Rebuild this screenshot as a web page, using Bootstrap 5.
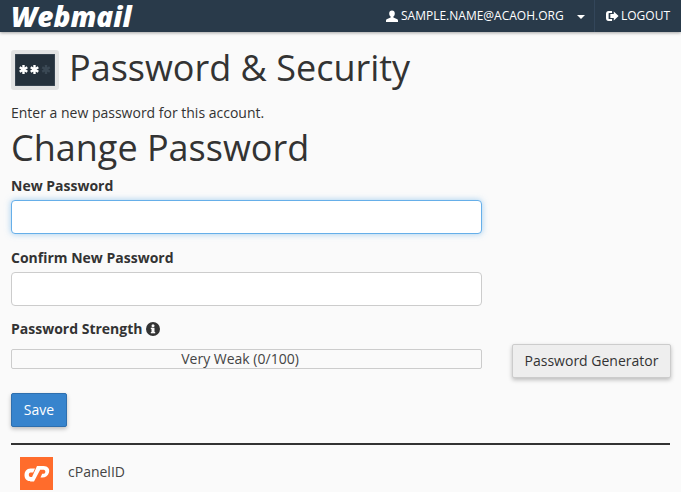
<!DOCTYPE html>
<html lang="en">
    <head>
        <meta charset="UTF-8" />
        <meta name="viewport" content="width=device-width, initial-scale=1" />
        <title>Password &amp; Security</title>
        <link href="https://cdn.jsdelivr.net/npm/bootstrap@5.3.0/dist/css/bootstrap.min.css" rel="stylesheet" />
        <style>
            body {
                background: #fafafa;
                color: #333;
                font-family: "Open Sans", sans-serif;
                font-size: 14px;
                overflow: hidden;
            }
            .top-bar {
                height: 32px;
                background: #293a4a;
                box-shadow: 0 1px 3px rgba(0, 0, 0, 0.35);
                color: #fff;
                font-size: 12px;
            }
            .brand-name {
                font-family: "Open Sans", sans-serif;
                font-size: 28px;
                font-weight: 800;
                font-style: italic;
                line-height: 30px;
                margin-left: 11px;
            }
            .user-box {
                flex: 0 0 208px;
                gap: 3px;
            }
            .user-caret {
                width: 0;
                height: 0;
                border-left: 4px solid transparent;
                border-right: 4px solid transparent;
                border-top: 4px solid #fff;
                margin-left: 10px;
                margin-top: 1px;
            }
            .logout-box {
                flex: 0 0 87px;
                height: 32px;
                border-left: 1px solid #33465a;
                padding-left: 11px;
                gap: 2px;
            }
            .page-wrap {
                padding: 0 11px;
            }
            .title-row {
                margin-top: 18px;
                height: 40px;
                gap: 10px;
            }
            .title-icon {
                width: 48px;
                height: 40px;
                background: #e3e3e3;
                border-radius: 3px;
                padding: 4px;
            }
            .title-text {
                font-size: 36px;
                font-weight: 400;
                line-height: 40px;
                margin: 0 0 4px;
            }
            .intro-text {
                margin: 13px 0 0;
                line-height: 20px;
            }
            .form-title {
                font-size: 36px;
                font-weight: 400;
                line-height: 40px;
                margin: 5px 0 0;
            }
            .field-label {
                font-weight: 700;
                line-height: 20px;
                margin: 8px 0 4px;
                display: block;
            }
            .form-column {
                width: 471px;
            }
            .pw-input {
                height: 34px;
                border: 1px solid #ccc;
                border-radius: 4px;
                background: #fff;
                box-shadow: none;
            }
            .pw-input.is-focused {
                border-color: #66afe9;
                box-shadow: 0 0 6px rgba(102, 175, 233, 0.6);
            }
            .field-gap {
                margin-bottom: 14px;
            }
            .field-gap + .field-gap {
                margin-bottom: 13px;
            }
            .strength-row {
                margin-top: 5px;
                height: 34px;
            }
            .strength-box {
                flex: 0 0 471px;
                height: 20px;
                margin-top: 5px;
                padding-right: 13px;
                border: 1px solid #ccc;
                border-radius: 2px;
                line-height: 18px;
                text-align: center;
                font-size: 14px;
                color: #444;
            }
            .generator-btn {
                flex: 0 0 159px;
                margin-left: 30px;
                height: 34px;
                padding: 0 0 2px;
                background: #eee;
                border: 1px solid #ccc;
                border-radius: 2px;
                box-shadow: 0 2px 4px rgba(0, 0, 0, 0.25);
                color: #333;
                font-size: 14px;
            }
            .save-btn {
                display: block;
                width: 56px;
                height: 34px;
                padding: 0 0 2px;
                margin-top: 15px;
                background: #3784cd;
                border: 1px solid #2e6fae;
                border-radius: 2px;
                box-shadow: 0 2px 4px rgba(0, 0, 0, 0.25);
                color: #fff;
                font-size: 14px;
            }
            .bottom-rule {
                margin: 16px 0 0;
                border: 0;
                border-top: 2px solid #333;
                opacity: 1;
                width: 659px;
            }
            .cpanel-row {
                padding: 12px 0 0 9px;
                gap: 15px;
                line-height: 30px;
                color: #444;
            }
        </style>
    </head>
    <body>
        <nav class="top-bar d-flex align-items-center">
            <div class="brand-name flex-grow-1">Webmail</div>
            <div class="user-box d-flex align-items-center">
                <svg width="12" height="12" viewBox="0 0 12 12" fill="#fff" class="flex-shrink-0">
                    <path d="M6 0.5c1.8 0 2.8 1.3 2.8 3 0 1.4-.6 2.6-1.4 3.1v1l3.4 1.4c.8.3 1.2.8 1.2 1.6V12H0v-1.4c0-.8.4-1.3 1.2-1.6l3.4-1.4v-1C3.8 6.100 3.200 4.900 3.200 3.500c0-1.700 1-3 2.800-3z" />
                </svg>
                <span>SAMPLE.NAME@ACAOH.ORG</span>
                <span class="user-caret"></span>
            </div>
            <div class="logout-box d-flex align-items-center">
                <svg width="13" height="12" viewBox="0 0 15 12" preserveAspectRatio="none" fill="#fff" class="flex-shrink-0">
                    <path d="M3 1h4v2H3.500a.5.5 0 0 0-.5.5v5a.5.5 0 0 0 .5.5H7v2H3a3 3 0 0 1-3-3V4a3 3 0 0 1 3-3z" />
                    <path d="M9 1.500 14.500 6 9 10.500V8H5V4h4z" />
                </svg>
                <span>LOGOUT</span>
            </div>
        </nav>

        <main class="page-wrap">
            <div class="title-row d-flex align-items-center">
                <div class="title-icon">
                    <svg width="40" height="32" viewBox="0 0 40 32" class="d-block">
                        <rect width="40" height="32" fill="#25313c" stroke="#4a5763" />
                        <g stroke="#fff" stroke-width="2.400">
                            <path d="M8.500 11v9M4.700 13.200l7.600 4.600M4.700 17.800l7.600-4.600" />
                            <path d="M19.500 11v9M15.700 13.200l7.600 4.600M15.700 17.800l7.600-4.600" />
                        </g>
                        <path stroke="#3a4854" stroke-width="2.400" d="M31 11v9M27.200 13.200l7.600 4.600M27.200 17.800l7.600-4.600" />
                    </svg>
                </div>
                <h1 class="title-text">Password &amp; Security</h1>
            </div>

            <p class="intro-text">Enter a new password for this account.</p>
            <h2 class="form-title">Change Password</h2>

            <form>
                <div class="form-column field-gap">
                    <label class="field-label" for="newPass">New Password</label>
                    <input type="password" id="newPass" class="form-control pw-input is-focused" />
                </div>
                <div class="form-column field-gap">
                    <label class="field-label" for="confirmPass">Confirm New Password</label>
                    <input type="password" id="confirmPass" class="form-control pw-input" />
                </div>
                <div class="field-label d-flex align-items-center gap-1 mb-0">
                    Password Strength
                    <svg width="14" height="14" viewBox="0 0 14 14">
                        <circle cx="7" cy="7" r="7" fill="#333" />
                        <rect x="5.500" y="5.800" width="3" height="5" fill="#fafafa" />
                        <rect x="4.800" y="10" width="4.400" height="1.300" fill="#fafafa" />
                        <rect x="4.800" y="5.800" width="2" height="1.200" fill="#fafafa" />
                        <circle cx="7" cy="3.700" r="1.500" fill="#fafafa" />
                    </svg>
                </div>
                <div class="strength-row d-flex align-items-start">
                    <div class="strength-box">Very Weak (0/100)</div>
                    <button type="button" class="btn generator-btn">Password Generator</button>
                </div>
                <button type="button" class="btn save-btn">Save</button>
            </form>

            <hr class="bottom-rule" />
            <div class="cpanel-row d-flex align-items-start">
                <svg width="33" height="33" viewBox="0 0 33 33" class="flex-shrink-0">
                    <rect width="33" height="33" fill="#ff6c2c" />
                    <path d="M15 11.500H10.500C6.500 11.500 4.500 14.500 4.500 18 4.500 21.500 6.500 24 9.500 24h2l2.200-4H10.500C8.300 20 8.300 15.500 10.500 15.500h2.700z" fill="#fff" />
                    <path d="M17 9h6.500c4.500 0 6.500 3 5.500 6.500-1 3.500-3.500 5-6.500 5h-2l1.700-3.700h1.500c2.200 0 2.200-4 0-4h-3.500L14 24.500H10z" fill="#fff" />
                </svg>
                <span>cPanelID</span>
            </div>
        </main>

        <script src="https://cdn.jsdelivr.net/npm/bootstrap@5.3.0/dist/js/bootstrap.bundle.min.js"></script>
    </body>
</html>
